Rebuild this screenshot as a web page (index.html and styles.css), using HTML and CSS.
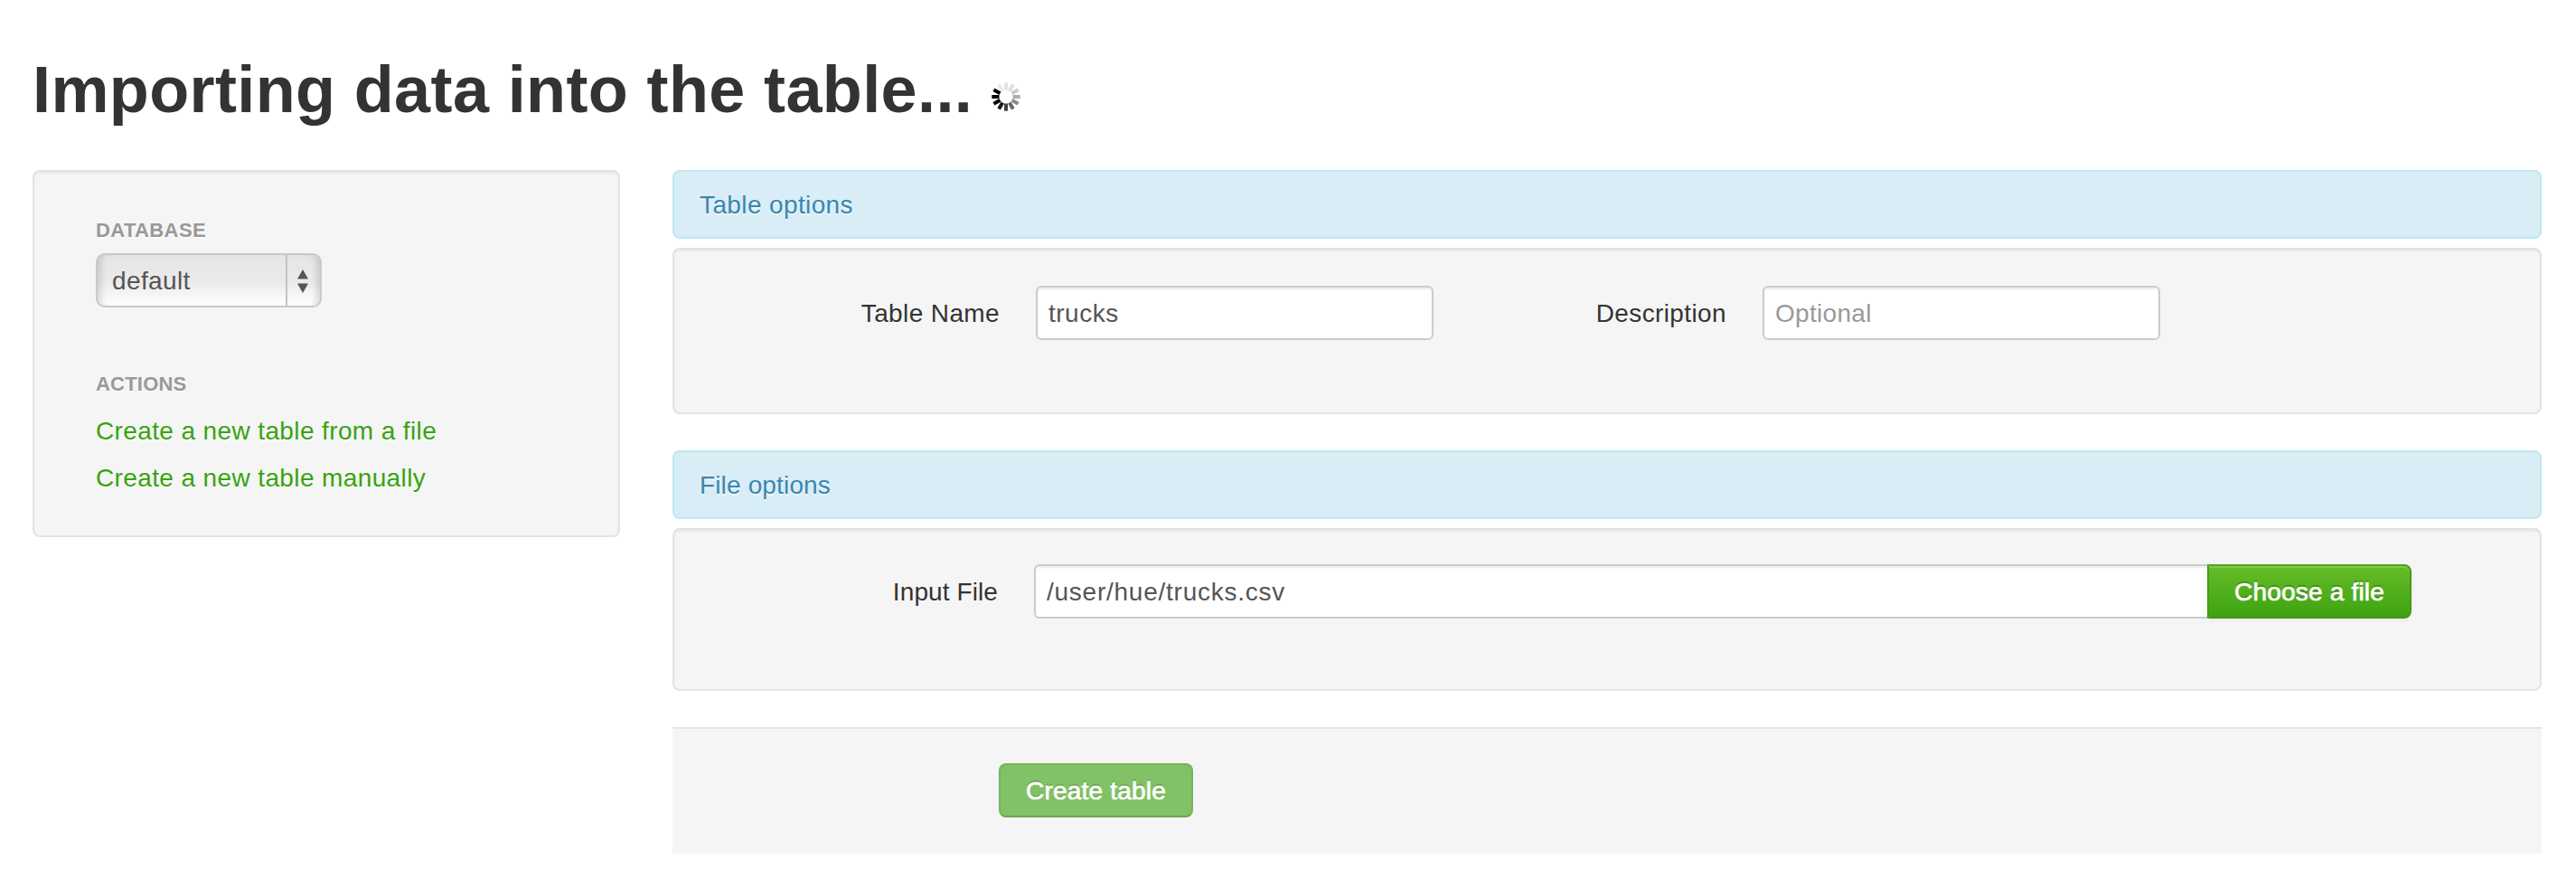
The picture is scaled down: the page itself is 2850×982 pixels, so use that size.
FILE: index.html
```html
<!DOCTYPE html>
<html lang="en">
<head>
<meta charset="utf-8">
<title>Importing data into the table...</title>
<link rel="stylesheet" href="styles.css">
</head>
<body>
<header class="page-header">
  <h1 class="page-title">Importing data into the table...</h1>
  <svg class="spinner" viewBox="-16 -16 32 32" stroke="#000" stroke-width="4">
    <path d="M0-7.500V-15.700" opacity=".1"/>
    <path d="M0-7.500V-15.700" transform="rotate(30)" opacity=".12"/>
    <path d="M0-7.500V-15.700" transform="rotate(60)" opacity=".2"/>
    <path d="M0-7.500V-15.700" transform="rotate(90)" opacity=".32"/>
    <path d="M0-7.500V-15.700" transform="rotate(120)" opacity=".45"/>
    <path d="M0-7.500V-15.700" transform="rotate(150)" opacity=".6"/>
    <path d="M0-7.500V-15.700" transform="rotate(180)" opacity=".75"/>
    <path d="M0-7.500V-15.700" transform="rotate(210)" opacity=".9"/>
    <path d="M0-7.500V-15.700" transform="rotate(240)"/>
    <path d="M0-7.500V-15.700" transform="rotate(270)"/>
    <path d="M0-7.500V-15.700" transform="rotate(300)"/>
    <path d="M0-7.500V-15.700" transform="rotate(330)" opacity=".08"/>
  </svg>
</header>
<div class="layout">
  <aside class="sidebar well">
    <h2 class="nav-header">Database</h2>
    <div class="select">
      <span class="select-value">default</span>
      <span class="select-arrows">
        <svg width="12" height="26" viewBox="0 0 12 26" fill="#555"><path d="M6 0l6 10.500H0zM6 26l6-10.500H0z"/></svg>
      </span>
    </div>
    <h2 class="nav-header nav-header-actions">Actions</h2>
    <a class="nav-link">Create a new table from a file</a>
    <a class="nav-link">Create a new table manually</a>
  </aside>
  <main class="content">
    <div class="alert">Table options</div>
    <section class="well form-row form-row-table">
      <label class="label label-name" for="name">Table Name</label>
      <input class="input" id="name" type="text" value="trucks">
      <label class="label label-description" for="description">Description</label>
      <input class="input" id="description" type="text" placeholder="Optional">
    </section>
    <div class="alert alert-file">File options</div>
    <section class="well form-row form-row-file">
      <label class="label label-file" for="path">Input File</label>
      <input class="input input-path" id="path" type="text" value="/user/hue/trucks.csv">
      <button class="btn btn-choose">Choose a file</button>
    </section>
    <div class="form-actions">
      <button class="btn btn-create">Create table</button>
    </div>
  </main>
</div>
</body>
</html>
```
FILE: styles.css
```css
* { box-sizing: border-box; }
body {
  margin: 0;
  padding: 59px 38px 38px 36px;
  background: #fff;
  color: #333;
  font: 28px/40px "Liberation Sans", Arial, sans-serif;
  letter-spacing: .38px;
}
.page-header { display: flex; align-items: flex-start; gap: 21px; height: 129px; }
.page-title { margin: 0; font-size: 72px; line-height: 80px; font-weight: bold; white-space: nowrap; }
.spinner { width: 32px; height: 32px; margin-top: 32px; }
.layout { display: grid; grid-template-columns: 650px 1fr; gap: 58px; align-items: start; }
.well {
  background: #f5f5f5;
  border: 2px solid #e3e3e3;
  border-radius: 8px;
  box-shadow: inset 0 2px 2px rgba(0,0,0,.05);
}
.sidebar { height: 406px; padding: 44px 68px; }
.nav-header {
  height: 40px;
  margin: 0 0 6px;
  font-size: 22px;
  line-height: 42px;
  color: #999;
  text-transform: uppercase;
  text-shadow: 0 2px 0 rgba(255,255,255,.5);
}
.nav-header-actions { margin: 64px 0 12px; letter-spacing: .2px; }
.nav-link { display: block; height: 40px; margin-bottom: 12px; line-height: 42px; color: #38a310; white-space: nowrap; text-shadow: 0 2px 0 rgba(255,255,255,.5); }
.select {
  display: flex;
  width: 250px;
  height: 60px;
  border: 2px solid #c9c9c9;
  border-radius: 10px;
  background: linear-gradient(#e4e4e4, #ebebeb 55%, #fff);
  box-shadow: inset 8px 0 6px -4px rgba(0,0,0,.12), inset -8px 0 6px -4px rgba(0,0,0,.12);
  color: #555;
}
.select-value { flex: 1; padding: 9px 16px 7px; }
.select-arrows { display: flex; align-items: center; justify-content: center; width: 38px; border-left: 2px solid #c4c4c4; padding: 2px 2px 0 0; }
.alert {
  height: 76px;
  margin-bottom: 10px;
  padding: 17px 28px 15px;
  border: 2px solid #bce8f1;
  border-radius: 8px;
  background: #d9edf7;
  color: #3a87ad;
  text-shadow: 0 2px 0 rgba(255,255,255,.5);
}
.alert-file { letter-spacing: .15px; }
.form-row { display: flex; align-items: flex-start; margin-bottom: 40px; }
.form-row-table { height: 184px; padding-top: 40px; }
.form-row-file { height: 180px; padding-top: 38px; }
.label { padding-top: 11px; text-align: right; margin-right: 40px; }
.label-name { width: 360px; }
.label-description { width: 324px; }
.label-file { width: 358px; letter-spacing: .1px; }
.input {
  width: 440px;
  height: 60px;
  margin: 0;
  padding: 9px 12px 7px;
  border: 2px solid #ccc;
  border-radius: 6px;
  background: #fff;
  box-shadow: inset 0 2px 2px rgba(0,0,0,.075);
  color: #555;
  font: inherit;
  letter-spacing: .5px;
}
.input::placeholder { color: #999; opacity: 1; letter-spacing: .3px; }
.input-path { width: 1298px; border-right: 0; border-radius: 6px 0 0 6px; letter-spacing: .75px; }
.btn {
  height: 60px;
  padding: 9px 0 7px;
  border: 2px solid;
  color: #fff;
  font: inherit;
  letter-spacing: .2px;
  white-space: nowrap;
  -webkit-text-stroke: .7px #fff;
}
.btn-choose {
  width: 226px;
  border-color: #4ea31c #45991a #4c901a #41a012;
  border-radius: 0 8px 8px 0;
  background: linear-gradient(#66bd28, #3da20f) border-box;
  box-shadow: inset 0 2px 0 rgba(255,255,255,.2), 0 2px 4px rgba(0,0,0,.05);
  text-shadow: 0 -2px 0 rgba(0,0,0,.25);
}
.form-actions { height: 140px; padding: 38px 361px; border-top: 2px solid #e5e5e5; background: #f5f5f5; }
.btn-create {
  display: block;
  width: 215px;
  border-color: #76b55b #76b55b #6ea657;
  border-radius: 8px;
  background: #80c265;
  text-shadow: 0 -2px 0 rgba(0,0,0,.16);
}
```
